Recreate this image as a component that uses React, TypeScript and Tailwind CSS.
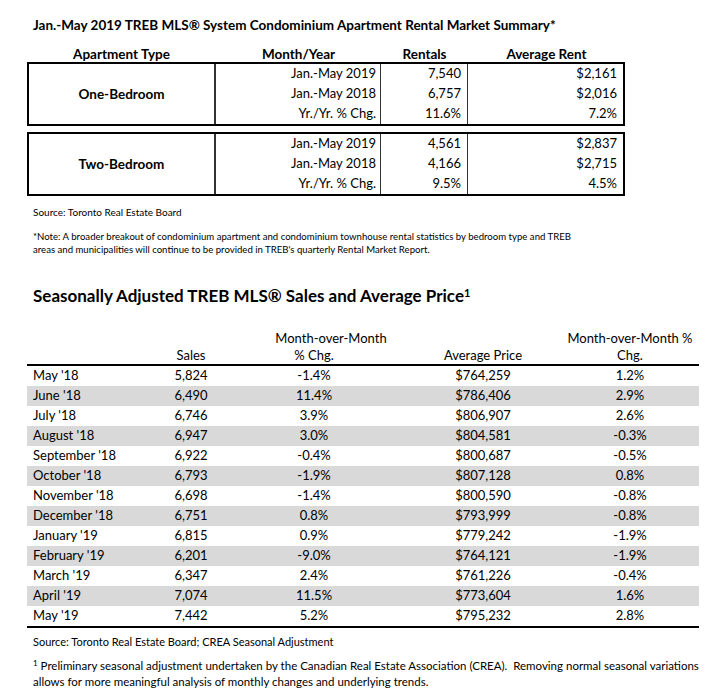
const rental = [
  {
    type: 'One-Bedroom',
    rows: [
      ['Jan.-May 2019', '7,540', '$2,161'],
      ['Jan.-May 2018', '6,757', '$2,016'],
      ['Yr./Yr. % Chg.', '11.6%', '7.2%'],
    ],
  },
  {
    type: 'Two-Bedroom',
    rows: [
      ['Jan.-May 2019', '4,561', '$2,837'],
      ['Jan.-May 2018', '4,166', '$2,715'],
      ['Yr./Yr. % Chg.', '9.5%', '4.5%'],
    ],
  },
]

const sales = [
  ["May '18", '5,824', '-1.4%', '$764,259', '1.2%'],
  ["June '18", '6,490', '11.4%', '$786,406', '2.9%'],
  ["July '18", '6,746', '3.9%', '$806,907', '2.6%'],
  ["August '18", '6,947', '3.0%', '$804,581', '-0.3%'],
  ["September '18", '6,922', '-0.4%', '$800,687', '-0.5%'],
  ["October '18", '6,793', '-1.9%', '$807,128', '0.8%'],
  ["November '18", '6,698', '-1.4%', '$800,590', '-0.8%'],
  ["December '18", '6,751', '0.8%', '$793,999', '-0.8%'],
  ["January '19", '6,815', '0.9%', '$779,242', '-1.9%'],
  ["February '19", '6,201', '-9.0%', '$764,121', '-1.9%'],
  ["March '19", '6,347', '2.4%', '$761,226', '-0.4%'],
  ["April '19", '7,074', '11.5%', '$773,604', '1.6%'],
  ["May '19", '7,442', '5.2%', '$795,232', '2.8%'],
]

function RentalBlock({ type, rows }: { type: string; rows: string[][] }) {
  return (
    <div className="grid grid-cols-[187px_165px_87px_1fr] border-2 border-black">
      <div className="row-span-3 flex items-center justify-center border-r-2 border-[#333] text-[13.5px] font-bold">
        {type}
      </div>
      {rows.map((r) => (
        <div key={r[0]} className="contents">
          <div className="flex h-[20px] items-center justify-end border-r border-[#333] pr-[4px]">{r[0]}</div>
          <div className="flex h-[20px] items-center justify-end border-r border-[#333] pr-[6px]">{r[1]}</div>
          <div className="flex h-[20px] items-center justify-end pr-[6px]">{r[2]}</div>
        </div>
      ))}
    </div>
  )
}

export default function App() {
  return (
    <div className="h-[692px] w-[728px] overflow-hidden bg-white font-['Lato',sans-serif] text-[13px] text-black">
      <div className="pt-[17px] pl-[33px] text-[13.5px] leading-[16px] font-bold">
        Jan.-May 2019 TREB MLS® System Condominium Apartment Rental Market Summary*
      </div>

      <div className="mt-[11px] ml-[27px] w-[598px]">
        <div className="grid h-[18px] grid-cols-[189px_165px_87px_1fr] items-center text-center text-[13.5px] font-bold">
          <div>Apartment Type</div>
          <div>Month/Year</div>
          <div>Rentals</div>
          <div>Average Rent</div>
        </div>
        <div className="flex flex-col gap-[6px]">
          {rental.map((b) => (
            <RentalBlock key={b.type} type={b.type} rows={b.rows} />
          ))}
        </div>
      </div>

      <div className="mt-[10px] pl-[33px] text-[10px] leading-[12px]">Source: Toronto Real Estate Board</div>
      <div className="mt-[12px] pl-[33px] text-[9.6px] leading-[13px]">
        *Note: A broader breakout of condominium apartment and condominium townhouse rental statistics by bedroom type and TREB
        <br />
        areas and municipalities will continue to be provided in TREB's quarterly Rental Market Report.
      </div>

      <div className="mt-[30px] pl-[33px] text-[17px] leading-[20px] font-bold">
        Seasonally Adjusted TREB MLS® Sales and Average Price<sup className="text-[11px]">1</sup>
      </div>

      <div className="mt-[24px] ml-[27px] w-[672px]">
        <div className="grid grid-cols-[103px_122px_124px_214px_109px] border-b-2 border-black leading-[17px]">
          <div />
          <div className="flex items-end justify-center">Sales</div>
          <div className="flex flex-col items-center whitespace-nowrap">
            <span className="pl-[34px]">Month-over-Month</span>
            <span>% Chg.</span>
          </div>
          <div className="flex items-end justify-center">Average Price</div>
          <div className="flex w-[80px] flex-col items-center whitespace-nowrap">
            <span>Month-over-Month %</span>
            <span>Chg.</span>
          </div>
        </div>
        <div className="border-b-2 border-black">
          {sales.map((r, i) => (
            <div
              key={r[0]}
              className={`grid h-[20px] grid-cols-[103px_122px_124px_214px_109px] items-center ${i % 2 === 1 ? 'bg-[#d9d9d9]' : ''}`}
            >
              <div className="pl-[6px] whitespace-nowrap">{r[0]}</div>
              <div className="text-center">{r[1]}</div>
              <div className="text-center">{r[2]}</div>
              <div className="text-center">{r[3]}</div>
              <div className="w-[80px] text-center">{r[4]}</div>
            </div>
          ))}
        </div>
      </div>

      <div className="mt-[7px] pl-[33px] text-[11px] leading-[14px]">
        Source: Toronto Real Estate Board; CREA Seasonal Adjustment
      </div>
      <div className="mt-[9px] pl-[33px] text-[11.5px] leading-[16px]">
        <sup className="text-[8px]">1</sup> Preliminary seasonal adjustment undertaken by the Canadian Real Estate Association (CREA).&nbsp; Removing normal seasonal variations
        <br />
        allows for more meaningful analysis of monthly changes and underlying trends.
      </div>
    </div>
  )
}
